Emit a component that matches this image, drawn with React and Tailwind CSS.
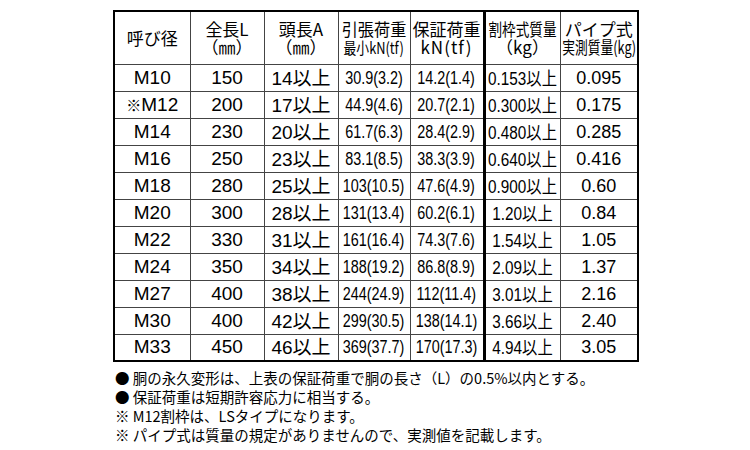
import React from "react";

const rows = [
  ["M10", "150", "14", "30.9(3.2)", "14.2(1.4)", "0.153", "0.095"],
  ["※M12", "200", "17", "44.9(4.6)", "20.7(2.1)", "0.300", "0.175"],
  ["M14", "230", "20", "61.7(6.3)", "28.4(2.9)", "0.480", "0.285"],
  ["M16", "250", "23", "83.1(8.5)", "38.3(3.9)", "0.640", "0.416"],
  ["M18", "280", "25", "103(10.5)", "47.6(4.9)", "0.900", "0.60"],
  ["M20", "300", "28", "131(13.4)", "60.2(6.1)", "1.20", "0.84"],
  ["M22", "330", "31", "161(16.4)", "74.3(7.6)", "1.54", "1.05"],
  ["M24", "350", "34", "188(19.2)", "86.8(8.9)", "2.09", "1.37"],
  ["M27", "400", "38", "244(24.9)", "112(11.4)", "3.01", "2.16"],
  ["M30", "400", "42", "299(30.5)", "138(14.1)", "3.66", "2.40"],
  ["M33", "450", "46", "369(37.7)", "170(17.3)", "4.94", "3.05"],
];

const jp = "font-['Noto_Sans_CJK_JP',sans-serif]";
const num = "font-['Liberation_Sans','Noto_Sans_CJK_JP',sans-serif]";

// squeezes text sideways but keeps it centred in its cell
function Narrow({ children, scale = "scale-x-[0.8]" }) {
  return (
    <div className="flex justify-center">
      <span className={`shrink-0 whitespace-nowrap ${scale}`}>{children}</span>
    </div>
  );
}

export default function App() {
  const cell = "border border-[#444] p-0 text-center align-middle";
  return (
    <div className="w-[750px] h-[450px] bg-white text-black pl-[113px] pt-[10px]">
      <table className="border-collapse table-fixed border-2 border-black w-[524px]">
        <colgroup>
          <col className="w-[76px]" />
          <col className="w-[74px]" />
          <col className="w-[74px]" />
          <col className="w-[72px]" />
          <col className="w-[74px]" />
          <col className="w-[76px]" />
          <col className="w-[78px]" />
        </colgroup>
        <thead>
          <tr className={`h-[53px] ${jp} text-[17px] leading-[18px]`}>
            <th className={`${cell} font-normal`}>呼び径</th>
            <th className={`${cell} font-normal`}>
              <div>全長L</div>
              <div>（㎜）</div>
            </th>
            <th className={`${cell} font-normal`}>
              <div>頭長A</div>
              <div>（㎜）</div>
            </th>
            <th className={`${cell} font-normal`}>
              <Narrow scale="scale-x-[0.95]">引張荷重</Narrow>
              <div className="text-[16px]">
                <Narrow>最小kN(tf)</Narrow>
              </div>
            </th>
            <th className={`${cell} font-normal border-r-[3px] border-r-black`}>
              <div>保証荷重</div>
              <div className="tracking-[1px]">kN(tf)</div>
            </th>
            <th className={`${cell} font-normal`}>
              <Narrow>割枠式質量</Narrow>
              <div>（kg）</div>
            </th>
            <th className={`${cell} font-normal`}>
              <div>パイプ式</div>
              <Narrow scale="scale-x-[0.75]">実測質量(kg)</Narrow>
            </th>
          </tr>
        </thead>
        <tbody>
          {rows.map((r) => (
            <tr key={r[0]} className="h-[27px] text-[19px] leading-[20px]">
              <td className={`${cell} ${num}`}>
                {r[0].startsWith("※") ? (
                  <span>
                    <span className={`${jp} text-[15px]`}>※</span>
                    {r[0].slice(1)}
                  </span>
                ) : (
                  r[0]
                )}
              </td>
              <td className={`${cell} ${num}`}>{r[1]}</td>
              <td className={`${cell} ${num}`}>
                {r[2]}
                <span className={jp}>以上</span>
              </td>
              <td className={`${cell} ${num} text-[18px]`}>
                <Narrow>{r[3]}</Narrow>
              </td>
              <td className={`${cell} ${num} text-[18px] border-r-[3px] border-r-black`}>
                <Narrow>{r[4]}</Narrow>
              </td>
              <td className={`${cell} ${num} text-[18px]`}>
                <Narrow scale="scale-x-[0.85]">
                  {r[5]}
                  <span className={jp}>以上</span>
                </Narrow>
              </td>
              <td className={`${cell} ${num} text-[18px]`}>{r[6]}</td>
            </tr>
          ))}
        </tbody>
      </table>
      <div className={`${jp} text-[14.5px] leading-[19px] pt-[6px] pl-[2px]`}>
        <p>● 胴の永久変形は、上表の保証荷重で胴の長さ（L）の0.5%以内とする。</p>
        <p>● 保証荷重は短期許容応力に相当する。</p>
        <p>※ M12割枠は、LSタイプになります。</p>
        <p>※ パイプ式は質量の規定がありませんので、実測値を記載します。</p>
      </div>
    </div>
  );
}
